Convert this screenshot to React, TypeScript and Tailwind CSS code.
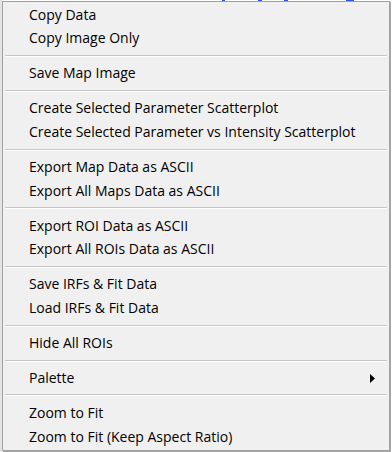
import React from 'react';

type Entry = { label: string; submenu?: boolean } | 'sep';

const entries: Entry[] = [
  { label: 'Copy Data' },
  { label: 'Copy Image Only' },
  'sep',
  { label: 'Save Map Image' },
  'sep',
  { label: 'Create Selected Parameter Scatterplot' },
  { label: 'Create Selected Parameter vs Intensity Scatterplot' },
  'sep',
  { label: 'Export Map Data as ASCII' },
  { label: 'Export All Maps Data as ASCII' },
  'sep',
  { label: 'Export ROI Data as ASCII' },
  { label: 'Export All ROIs Data as ASCII' },
  'sep',
  { label: 'Save IRFs & Fit Data' },
  { label: 'Load IRFs & Fit Data' },
  'sep',
  { label: 'Hide All ROIs' },
  'sep',
  { label: 'Palette', submenu: true },
  'sep',
  { label: 'Zoom to Fit' },
  { label: 'Zoom to Fit (Keep Aspect Ratio)' },
];

export default function App() {
  return (
    <div
      className="w-[392px] h-[452px] bg-white overflow-hidden flex"
      style={{ fontFamily: '"Open Sans", "Noto Sans", sans-serif' }}
    >
      {/* window edge behind the menu */}
      <div className="w-[2px] h-full bg-[#e4e4e4]" />

      <div className="flex flex-col">
        {/* link underline peeking out above the menu */}
        <div className="h-px flex">
          <div className="ml-[220px] w-[3px] bg-[#2a52f0]" />
          <div className="ml-[33px] w-[4px] bg-[#2a52f0]" />
          <div className="ml-[22px] w-[4px] bg-[#2a52f0]" />
          <div className="ml-[58px] w-[8px] bg-[#2a52f0]" />
        </div>

        {/* Menu */}
        <div className="w-[388px] h-[450px] border border-[#a0a0a0] bg-[#f0f0f0] shadow-[1px_1px_0_#a8a8a8] pt-[1px] flex flex-col">
          {entries.map((e, i) =>
            e === 'sep' ? (
              <div key={i} className="h-[11.33px] flex items-center px-[2px]">
                <div className="w-full border-t border-[#c5c5c5] border-b border-b-white" />
              </div>
            ) : (
              <div
                key={i}
                className="h-[23.67px] shrink-0 flex items-center pl-[26px] pr-[12px] text-[14px] text-black leading-none"
              >
                <span className="flex-1 whitespace-nowrap">{e.label}</span>
                {e.submenu && (
                  <svg width="5" height="9" viewBox="0 0 5 9" className="mr-[2px]">
                    <polygon points="0,0 5,4.5 0,9" fill="#000" />
                  </svg>
                )}
              </div>
            )
          )}
        </div>
      </div>
    </div>
  );
}
